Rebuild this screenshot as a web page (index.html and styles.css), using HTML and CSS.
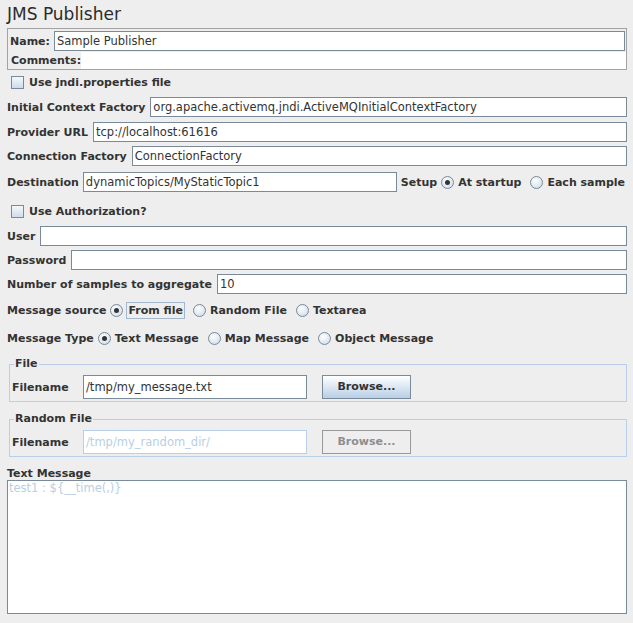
FILE: index.html
```html
<!DOCTYPE html>
<html>
<head>
<meta charset="utf-8">
<link rel="stylesheet" href="styles.css">
</head>
<body>
<div class="page">
  <div class="title">JMS Publisher</div>
  <div class="namepanel">
    <div class="namerow">
      <span class="lbl">Name:</span>
      <div class="field namefield">Sample Publisher</div>
    </div>
    <div class="commentsrow">
      <span class="lbl">Comments:</span>
      <div class="comments"></div>
    </div>
  </div>
  <div class="row chkrow">
    <span class="check"></span><span class="lbl">Use jndi.properties file</span>
  </div>
  <div class="row r-icf">
    <span class="lbl">Initial Context Factory</span>
    <div class="field grow">org.apache.activemq.jndi.ActiveMQInitialContextFactory</div>
  </div>
  <div class="row">
    <span class="lbl">Provider URL</span>
    <div class="field grow">tcp://localhost:61616</div>
  </div>
  <div class="row">
    <span class="lbl">Connection Factory</span>
    <div class="field grow">ConnectionFactory</div>
  </div>
  <div class="row destrow">
    <span class="lbl">Destination</span>
    <div class="field destfield">dynamicTopics/MyStaticTopic1</div>
    <span class="lbl setup">Setup</span>
    <span class="radio on"></span><span class="lbl opt">At startup</span>
    <span class="radio"></span><span class="lbl">Each sample</span>
  </div>
  <div class="row chkrow authrow">
    <span class="check"></span><span class="lbl">Use Authorization?</span>
  </div>
  <div class="row r-user">
    <span class="lbl">User</span>
    <div class="field grow"></div>
  </div>
  <div class="row r-pass">
    <span class="lbl">Password</span>
    <div class="field grow"></div>
  </div>
  <div class="row r-num">
    <span class="lbl">Number of samples to aggregate</span>
    <div class="field grow">10</div>
  </div>
  <div class="row radiorow r-src">
    <span class="lbl">Message source</span>
    <span class="radio on"></span><span class="lbl opt focus">From file</span>
    <span class="radio"></span><span class="lbl opt">Random File</span>
    <span class="radio"></span><span class="lbl">Textarea</span>
  </div>
  <div class="row radiorow r-type">
    <span class="lbl">Message Type</span>
    <span class="radio on"></span><span class="lbl opt">Text Message</span>
    <span class="radio"></span><span class="lbl opt">Map Message</span>
    <span class="radio"></span><span class="lbl">Object Message</span>
  </div>
  <fieldset class="group">
    <legend class="legend">File</legend>
    <div class="filerow">
      <span class="lbl flbl">Filename</span>
      <div class="field filefield">/tmp/my_message.txt</div>
      <div class="button">Browse...</div>
    </div>
  </fieldset>
  <fieldset class="group group2">
    <legend class="legend">Random File</legend>
    <div class="filerow">
      <span class="lbl flbl">Filename</span>
      <div class="field filefield disabled">/tmp/my_random_dir/</div>
      <div class="button disabledbtn">Browse...</div>
    </div>
  </fieldset>
  <div class="tmlabel lbl">Text Message</div>
  <div class="textarea">test1 : ${__time(,)}</div>
</div>
</body>
</html>
```

FILE: styles.css
```css
html, body {
  margin: 0;
  padding: 0;
  background: #eeeeee;
}
body {
  width: 633px;
  height: 623px;
  overflow: hidden;
  font-family: "DejaVu Sans", sans-serif;
  font-size: 11px;
  color: #333333;
}
.page {
  padding: 0 6px 0 7px;
  display: flex;
  flex-direction: column;
}
.title {
  height: 28px;
  line-height: 28px;
  font-size: 17px;
  color: #2b2b2b;
}
.lbl {
  font-weight: bold;
  white-space: nowrap;
  line-height: 14px;
  padding-top: 2px;
}
.namepanel {
  height: 42px;
  box-sizing: border-box;
  border: 1px solid #a3a3a3;
  padding: 1px 0 0 1px;
  display: flex;
  flex-direction: column;
}
.namerow {
  display: flex;
  align-items: center;
  height: 21px;
  flex: none;
  padding-left: 1px;
}
.namefield {
  flex: 1;
  margin-left: 4px;
  margin-right: 1px;
  height: 19px;
  line-height: 17px;
}
.commentsrow {
  display: flex;
  align-items: stretch;
  height: 18px;
  flex: none;
  padding-left: 2px;
}
.commentsrow .lbl {
  padding-top: 3px;
}
.comments {
  flex: 1;
  background: #ffffff;
  margin-top: 1px;
}
.field {
  box-sizing: border-box;
  background: #ffffff;
  border: 1px solid #7a8a99;
  height: 20px;
  line-height: 18px;
  padding-left: 2px;
  font-weight: normal;
  font-size: 11.5px;
  white-space: nowrap;
  overflow: hidden;
}
.row {
  display: flex;
  align-items: center;
  height: 24px;
  gap: 5px;
}
.grow {
  flex: 1;
}
.chkrow {
  padding-left: 4px;
  gap: 5px;
}
.r-icf {
  height: 26px;
}
.check {
  width: 13px;
  height: 13px;
  box-sizing: border-box;
  border: 1px solid #7a8a99;
  background: linear-gradient(#f4f8fb, #cfdcea);
}
.destrow {
  height: 28px;
  gap: 4px;
}
.destfield {
  width: 314px;
  margin-left: 0;
}
.radio {
  width: 13px;
  height: 13px;
  box-sizing: border-box;
  border-radius: 50%;
  border: 1px solid #7a8a99;
  background: radial-gradient(circle at 40% 35%, #ffffff, #c8d7e6);
  display: flex;
  align-items: center;
  justify-content: center;
}
.radio.on::after {
  content: "";
  width: 5px;
  height: 5px;
  border-radius: 50%;
  background: #333333;
}
.opt {
  margin-right: 5px;
}
.authrow {
  height: 30px;
}
.r-user {
  height: 20px;
}
.r-pass {
  height: 28px;
}
.r-num {
  height: 20px;
}
.radiorow {
  gap: 4px;
}
.r-src {
  height: 32px;
}
.r-type {
  height: 24px;
}
.focus {
  border: 1px solid #a3b8cc;
  padding: 1px 1px 0 1px;
  margin-left: -1px;
  margin-right: 4px;
}
.group {
  margin: 7px 0 0 2px;
  padding: 0 2px 1px 2px;
  border: 1px solid #b8cfe5;
  min-width: 0;
}
.group2 {
  margin-top: 10px;
}
.legend {
  font-weight: bold;
  padding: 0 1px;
  margin-left: 2px;
  line-height: 14px;
}
.filerow {
  display: flex;
  align-items: center;
  height: 26px;
  margin-top: 3px;
}
.flbl {
  width: 71px;
}
.filefield {
  width: 224px;
  height: 24px;
  line-height: 22px;
}
.disabled {
  border-color: #b8cfe5;
  color: #b8cfe5;
}
.button {
  margin-left: 15px;
  width: 89px;
  height: 24px;
  box-sizing: border-box;
  border: 1px solid #7a8a99;
  background: linear-gradient(#ffffff, #b8cfe5);
  font-weight: bold;
  text-align: center;
  line-height: 22px;
}
.disabledbtn {
  background: #eeeeee;
  border-color: #999999;
  color: #8e8e8e;
}
.tmlabel {
  margin-top: 8px;
  height: 15px;
  box-sizing: border-box;
}
.textarea {
  height: 134px;
  box-sizing: border-box;
  border: 1px solid #7a8a99;
  background: #ffffff;
  color: #b8cfe5;
  font-size: 11.5px;
  padding-left: 1px;
  line-height: 15px;
}
```
